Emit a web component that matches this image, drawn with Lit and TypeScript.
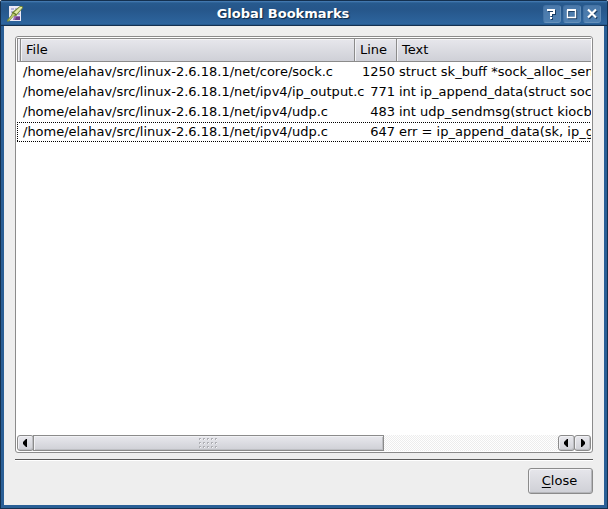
import { LitElement, html, css, svg } from "lit";
import { customElement, property, state } from "lit/decorators.js";
import { classMap } from "lit/directives/class-map.js";

interface Bookmark {
  file: string;
  line: number;
  text: string;
}

@customElement("title-bar")
class TitleBar extends LitElement {
  @property() heading = "";

  static styles = css`
    :host {
      display: flex;
      align-items: center;
      height: 25px;
      box-sizing: border-box;
      padding: 2px 6px 0;
      border: 1px solid #14304f;
      border-bottom: 0;
      background: linear-gradient(#4a80b8 0, #275a8e 2px, #26568a 8px, #2d659e 23px, #1f4f80 24px);
      color: #fff;
    }
    .icon {
      width: 16px;
      height: 16px;
      flex: none;
    }
    .heading {
      flex: 1;
      margin: 0;
      font-size: 13px;
      line-height: 20px;
      font-weight: bold;
      text-align: center;
      text-shadow: 1px 1px 1px #0b2440;
    }
    .controls {
      display: flex;
      gap: 2px;
    }
    .control {
      display: block;
      width: 18px;
      height: 18px;
      padding: 0;
      border: 1px solid #6c94bd;
      border-color: #4573a4 #5f8bb6 #6690ba #4573a4;
      border-radius: 3px;
      background: linear-gradient(#4a78a9, #4f80b2);
    }
    .glyph {
      display: block;
      width: 16px;
      height: 16px;
    }
  `;

  private control(label: string, shape: unknown) {
    return html`<button class="control" aria-label=${label}>
      <svg class="glyph" viewBox="0 0 16 16" fill="none" stroke-width="2">
        <g stroke="#1a3d63" transform="translate(1 1)">${shape}</g>
        <g stroke="#fff">${shape}</g>
      </svg>
    </button>`;
  }

  render() {
    return html`
      <svg class="icon" viewBox="0 0 16 16" aria-hidden="true">
        <path d="M2 0h12v15H2z" fill="#eceaf7" />
        <path d="M4 2h3v2H4zM8 2h2v2H8zM4 5h2v2H4zM4 8h2v2H4zM11 7h2v2h-2z" fill="#b5b4da" />
        <path d="M7 10h6v4H6z" fill="#9a6fb3" />
        <path d="M9 11h4v3H8z" fill="#6b3c87" />
        <path d="M13 0h2l1 1v1l-6 7-1 1H7l-5 5.500H0V14l4.500-5L5 6.500l1-1z" fill="#76893a" />
        <path d="M13 1h2v1L9.500 8 7 6.500z" fill="#e3eba6" />
        <path d="M6 7l3 2-2 .5-5 5H1l4-5z" fill="#c3d272" />
        <path d="M5.500 6.500l4 2.500" stroke="#5c7024" fill="none" />
      </svg>
      <h1 class="heading">${this.heading}</h1>
      <div class="controls">
        ${this.control("Help", svg`<path d="M4 5V4h6v3H7v3M7 11v2" />`)}
        ${this.control(
          "Maximize",
          svg`<path d="M3 4h9" /><path d="M3.500 4v7.500h8V4" stroke-width="1.400" />`
        )}
        ${this.control("Close window", svg`<path d="M4 3.500l8 8M12 3.500l-8 8" stroke-width="2.200" />`)}
      </div>
    `;
  }
}

@customElement("scroll-bar")
class ScrollBar extends LitElement {
  @property({ type: Number }) extent = 100;

  static styles = css`
    :host {
      display: flex;
      height: 16px;
    }
    .arrow,
    .thumb {
      box-sizing: border-box;
      height: 16px;
      padding: 0;
      border: 1px solid #8b8b8b;
      background: linear-gradient(#e8e8ed, #cfd0d6);
      box-shadow: inset 1px 1px #f1f1f4, inset -1px -1px #bdbec2;
    }
    .arrow {
      flex: none;
      width: 17px;
      border-radius: 3px;
    }
    .arrow + .arrow {
      margin-left: -1px;
    }
    .tip {
      display: block;
      width: 14px;
      height: 14px;
    }
    .track {
      flex: 1;
      background: repeating-conic-gradient(#ededed 0 25%, #fff 0 50%) 0 0 / 2px 2px;
    }
    .thumb {
      display: flex;
      align-items: center;
      justify-content: center;
      margin-left: -1px;
    }
    .grip {
      width: 19px;
      height: 10px;
    }
  `;

  private arrow(label: string, d: string) {
    return html`<button class="arrow" aria-label=${label}>
      <svg class="tip" viewBox="0 0 14 14"><path d=${d} /></svg>
    </button>`;
  }

  render() {
    const left = "M9 3v8H8L5 8V6l3-3z";
    const right = "M6 3v8h1l3-3V6L7 3z";
    const dots = [0, 4, 8].flatMap((y) => [0, 4, 8, 12, 16].map((x) => ({ x, y })));
    return html`
      ${this.arrow("Scroll left", left)}
      <div class="track">
        <div class="thumb" style="width:${this.extent}%">
          <svg class="grip" viewBox="0 0 19 10" shape-rendering="crispEdges">
            ${dots.map(
              ({ x, y }) => svg`
                <path d="M${x} ${y}h2v1h-1v1h-1z" fill="#aeafb4" />
                <path d="M${x + 1} ${y + 1}h1v1h-1z" fill="#f8f8fa" />`
            )}
          </svg>
        </div>
      </div>
      ${this.arrow("Scroll left", left)} ${this.arrow("Scroll right", right)}
    `;
  }
}

@customElement("bookmark-list")
class BookmarkList extends LitElement {
  @property({ attribute: false }) bookmarks: Bookmark[] = [];
  @state() private current = 3;

  static styles = css`
    :host {
      display: flex;
      flex-direction: column;
      min-height: 0;
      box-sizing: border-box;
      padding: 1px;
      border: 1px solid #8b8b8b;
      border-radius: 3px;
      background: #fff;
      overflow: hidden;
    }
    .view {
      flex: 1;
      min-height: 0;
      overflow: hidden;
    }
    .table {
      width: 100%;
      table-layout: fixed;
      border-spacing: 0;
      font-size: 13px;
      line-height: 20px;
      color: #000;
    }
    .mark-col {
      width: 4px;
    }
    .file-col {
      width: 334px;
    }
    .line-col {
      width: 42px;
    }
    .head {
      height: 24px;
      box-sizing: border-box;
      padding: 0 5px;
      border: 1px solid #8b8b8b;
      border-left-width: 0;
      background: linear-gradient(#e7e7ec, #cfd0d7);
      box-shadow: inset 1px 1px #f3f3f6;
      font-weight: normal;
      text-align: left;
      white-space: nowrap;
    }
    .mark {
      padding: 0;
      border-left-width: 1px;
    }
    .head:last-child {
      border-right-width: 0;
    }
    .cell {
      height: 20px;
      padding: 0 2px;
      white-space: nowrap;
    }
    .empty {
      padding: 0;
    }
    .number {
      text-align: right;
    }
    .current .cell {
      background:
        repeating-linear-gradient(90deg, #000 0 1px, #fff 1px 2px) top / 100% 1px no-repeat,
        repeating-linear-gradient(90deg, #000 0 1px, #fff 1px 2px) bottom / 100% 1px no-repeat;
    }
    .current .empty {
      background:
        repeating-linear-gradient(90deg, #000 0 1px, #fff 1px 2px) top / 100% 1px no-repeat,
        repeating-linear-gradient(90deg, #000 0 1px, #fff 1px 2px) bottom / 100% 1px no-repeat,
        repeating-linear-gradient(#000 0 1px, #fff 1px 2px) left / 1px 100% no-repeat;
    }
  `;

  render() {
    return html`
      <div class="view">
        <table class="table">
          <colgroup>
            <col class="mark-col" />
            <col class="file-col" />
            <col class="line-col" />
            <col />
          </colgroup>
          <thead>
            <tr>
              <td class="head mark"></td>
              <th class="head" scope="col">File</th>
              <th class="head" scope="col">Line</th>
              <th class="head" scope="col">Text</th>
            </tr>
          </thead>
          <tbody>
            ${this.bookmarks.map(
              (b, i) => html`
                <tr
                  class=${classMap({ current: i === this.current })}
                  @click=${() => (this.current = i)}
                >
                  <td class="cell empty"></td>
                  <td class="cell">${b.file}</td>
                  <td class="cell number">${b.line}</td>
                  <td class="cell">${b.text}</td>
                </tr>
              `
            )}
          </tbody>
        </table>
      </div>
      <scroll-bar .extent=${67}></scroll-bar>
    `;
  }
}

@customElement("app-root")
class AppRoot extends LitElement {
  private bookmarks: Bookmark[] = [
    {
      file: "/home/elahav/src/linux-2.6.18.1/net/core/sock.c",
      line: 1250,
      text: "struct sk_buff *sock_alloc_sen",
    },
    {
      file: "/home/elahav/src/linux-2.6.18.1/net/ipv4/ip_output.c",
      line: 771,
      text: "int ip_append_data(struct sock",
    },
    {
      file: "/home/elahav/src/linux-2.6.18.1/net/ipv4/udp.c",
      line: 483,
      text: "int udp_sendmsg(struct kiocb",
    },
    {
      file: "/home/elahav/src/linux-2.6.18.1/net/ipv4/udp.c",
      line: 647,
      text: "err = ip_append_data(sk, ip_g",
    },
  ];

  static styles = css`
    :host {
      display: flex;
      flex-direction: column;
      height: 100vh;
      box-sizing: border-box;
      border-radius: 3px 3px 0 0;
      overflow: hidden;
      background: #14304f;
      font-family: "DejaVu Sans", Verdana, sans-serif;
    }
    .body {
      flex: 1;
      min-height: 0;
      display: flex;
      flex-direction: column;
      box-sizing: border-box;
      padding: 11px;
      border: 4px solid #2a5f96;
      border-top: 0;
      background: #eee;
      outline: 1px solid #14304f;
      outline-offset: -1px;
      clip-path: inset(0);
    }
    .list {
      flex: 1;
    }
    .rule {
      width: 100%;
      margin: 6px 0 7px;
      border: 0;
      border-top: 1px solid #5a5a5a;
      border-bottom: 1px solid #fff;
    }
    .close {
      align-self: flex-end;
      width: 65px;
      height: 26px;
      padding: 0 2px 0 0;
      border: 1px solid #8b8b8b;
      border-radius: 3px;
      background: linear-gradient(#e6e6eb, #cfd0d6);
      box-shadow: inset 1px 1px #f3f3f6, inset -1px -1px #b5b6ba;
      font: 13px/20px "DejaVu Sans", Verdana, sans-serif;
      color: #000;
    }
    .key {
      text-decoration: underline;
      text-underline-offset: 2px;
    }
  `;

  render() {
    return html`
      <title-bar .heading=${"Global Bookmarks"}></title-bar>
      <main class="body">
        <bookmark-list class="list" .bookmarks=${this.bookmarks}></bookmark-list>
        <hr class="rule" />
        <button class="close"><span class="key">C</span>lose</button>
      </main>
    `;
  }
}
